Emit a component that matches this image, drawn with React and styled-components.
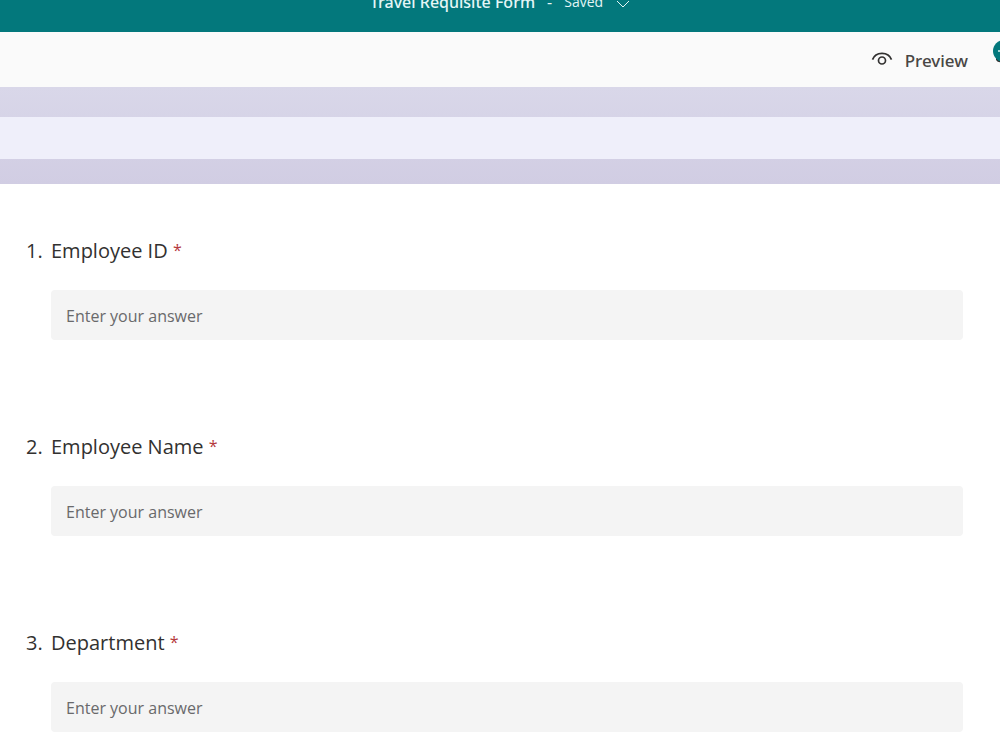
import React from "react";
import styled, { createGlobalStyle } from "styled-components";

const GlobalStyle = createGlobalStyle`
  *, *::before, *::after { box-sizing: border-box; }
  body {
    margin: 0;
    background: #fff;
    color: #323130;
    font-family: "Open Sans", "Noto Sans", sans-serif;
    overflow-x: hidden;
  }
`;

const Header = styled.header`
  display: flex;
  align-items: flex-end;
  height: 32px;
  overflow: hidden;
  background: #03787c;
  color: #e4f6f6;
`;

const HeaderBar = styled.div`
  display: flex;
  flex: 1;
  align-items: center;
  justify-content: center;
  gap: 12px;
  height: 60px;
`;

const FormTitle = styled.h1`
  margin: 0;
  font-family: "Noto Sans", sans-serif;
  font-size: 16px;
  font-weight: 500;
  line-height: 24px;
`;

const SaveStatus = styled.button`
  display: flex;
  align-items: center;
  gap: 13px;
  padding: 0;
  border: 0;
  background: none;
  color: inherit;
  font: inherit;
  font-size: 14px;
  line-height: 24px;
`;

const Chevron = styled.svg`
  margin-top: 4px;
`;

const Toolbar = styled.div`
  display: flex;
  align-items: center;
  justify-content: flex-end;
  gap: 25px;
  height: 55px;
  overflow: hidden;
  background: #fafafa;
`;

const PreviewButton = styled.button`
  display: flex;
  align-items: center;
  gap: 12px;
  padding: 2px 0 0;
  border: 0;
  background: none;
  color: #484644;
  font-family: "Noto Sans", sans-serif;
  font-size: 17px;
  font-weight: 500;
  line-height: 24px;
`;

const EyeIcon = styled.svg`
  margin-bottom: 4px;
`;

const Presence = styled.svg`
  flex: none;
  align-self: flex-start;
  margin: 8px -15px 0 0;
`;

const Banner = styled.div`
  padding: 30px 0 25px;
  background: linear-gradient(#d9d7e9, #d1cde3);
`;

const BannerStrip = styled.div`
  height: 42px;
  background: #efeffa;
`;

const Questions = styled.form`
  display: flex;
  flex-direction: column;
  gap: 91px;
  padding: 51px 37px 18px 26px;
`;

const Question = styled.div`
  display: grid;
  grid-template-columns: 25px 1fr;
  row-gap: 23px;
`;

const Number = styled.span`
  font-size: 20px;
  line-height: 32px;
`;

const Label = styled.label`
  font-size: 20px;
  line-height: 32px;
`;

const Required = styled.span`
  color: #b5383c;
  font-size: 16px;
  line-height: 16px;
  vertical-align: 2px;
`;

const Answer = styled.input`
  grid-column: 2;
  width: 100%;
  height: 50px;
  padding: 2px 15px 0;
  border: 0;
  border-radius: 4px;
  background: #f4f4f4;
  color: #323130;
  font: inherit;
  font-size: 16px;
  &::placeholder { color: #69696b; opacity: 1; }
`;

const questions = ["Employee ID", "Employee Name", "Department"];

export default function App() {
  return (
    <>
      <GlobalStyle />
      <Header>
        <HeaderBar>
          <FormTitle>Travel Requisite Form</FormTitle>
          <span>-</span>
          <SaveStatus type="button">
            Saved
            <Chevron width="14" height="8" viewBox="0 0 14 8" fill="none" stroke="currentColor" aria-hidden="true">
              <path d="M1 1l6 6 6-6" />
            </Chevron>
          </SaveStatus>
        </HeaderBar>
      </Header>
      <Toolbar>
        <PreviewButton type="button">
          <EyeIcon width="22" height="16" viewBox="0 0 22 16" fill="none" stroke="#323130" strokeWidth="1.700" aria-hidden="true">
            <path d="M1.5 8.600C3 4.500 6.600 2.300 11 2.300s8 2.200 9.500 6.300" />
            <circle cx="11" cy="9.500" r="3.500" />
          </EyeIcon>
          Preview
        </PreviewButton>
        <Presence width="22" height="24" viewBox="0 0 22 24" aria-hidden="true">
          <path d="M3 15v5q2 3 6 2z" fill="#323130" />
          <circle cx="11" cy="11" r="11" fill="#03787c" />
          <path d="M5 11h12" stroke="#a5d5d5" strokeWidth="2" />
        </Presence>
      </Toolbar>
      <Banner>
        <BannerStrip />
      </Banner>
      <Questions>
        {questions.map((text, i) => (
          <Question key={text}>
            <Number>{i + 1}.</Number>
            <Label htmlFor={`q${i}`}>
              {text} <Required aria-hidden="true">*</Required>
            </Label>
            <Answer id={`q${i}`} type="text" placeholder="Enter your answer" required />
          </Question>
        ))}
      </Questions>
    </>
  );
}
